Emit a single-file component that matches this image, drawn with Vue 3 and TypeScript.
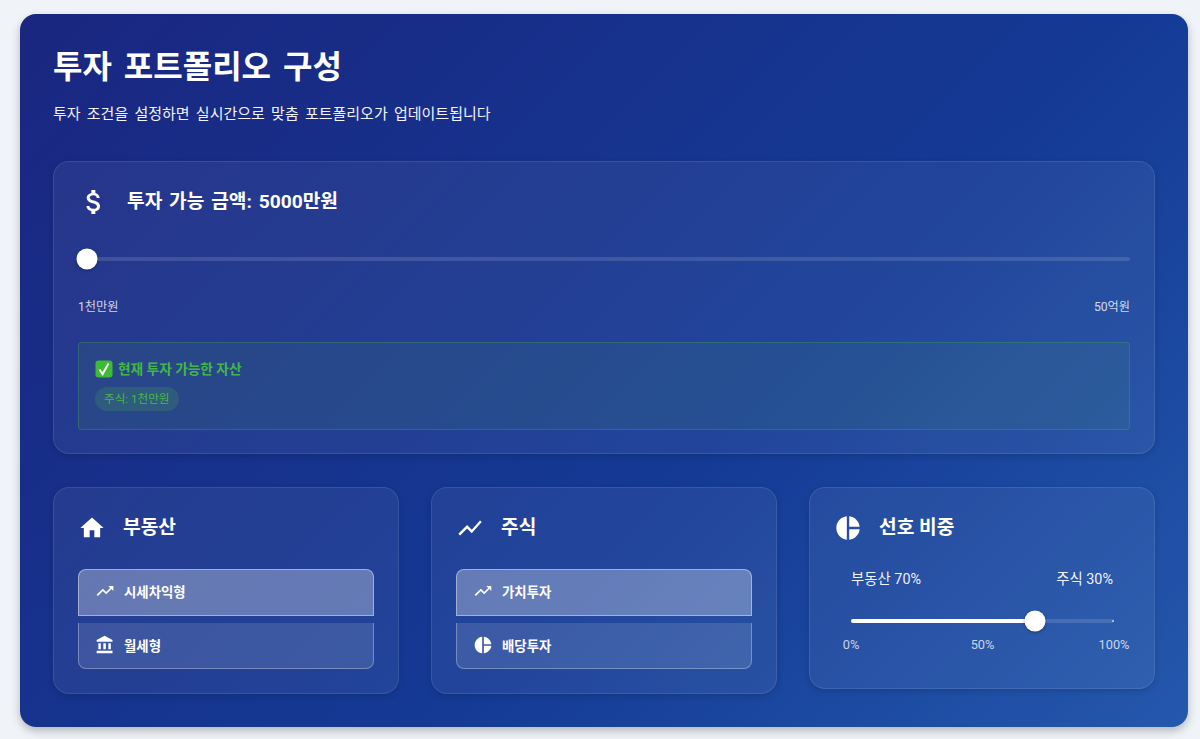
<script setup lang="ts">
const icons: Record<string, string> = {
  money: 'M11.8 10.9c-2.27-.59-3-1.2-3-2.15 0-1.09 1.01-1.85 2.7-1.85 1.78 0 2.44.85 2.5 2.1h2.21c-.07-1.72-1.12-3.3-3.21-3.81V3h-3v2.16c-1.94.42-3.5 1.68-3.5 3.61 0 2.31 1.91 3.46 4.7 4.13 2.5.6 3 1.48 3 2.41 0 .69-.49 1.79-2.7 1.79-2.06 0-2.87-.92-2.98-2.1h-2.2c.12 2.19 1.76 3.42 3.68 3.83V21h3v-2.15c1.95-.37 3.5-1.5 3.5-3.55 0-2.84-2.43-3.81-4.7-4.4z',
  home: 'M10 20v-6h4v6h5v-8h3L12 3 2 12h3v8z',
  chart: 'M3.5 18.49l6-6.01 4 4L22 6.92l-1.41-1.41-7.09 7.97-4-4L2 16.99z',
  trend: 'M16 6l2.29 2.29-4.88 4.88-4-4L2 16.59 3.41 18l6-6 4 4 6.3-6.29L22 12V6z',
  bank: 'M4 10v7h3v-7H4zm6 0v7h3v-7h-3zM2 22h19v-3H2v3zm14-12v7h3v-7h-3zm-4.5-9L2 6v2h19V6l-9.5-5z',
  pie: 'M11 2v20c-5.07-.5-9-4.79-9-10s3.93-9.5 9-10zm2.03 0v8.99H22c-.47-4.74-4.24-8.52-8.97-8.99zm0 11.01V22c4.74-.47 8.5-4.25 8.97-8.99h-8.97z',
}
const cards = [
  { title: '부동산', icon: 'home', options: [{ label: '시세차익형', icon: 'trend' }, { label: '월세형', icon: 'bank' }] },
  { title: '주식', icon: 'chart', options: [{ label: '가치투자', icon: 'trend' }, { label: '배당투자', icon: 'pie' }] },
]
const ratio = 70
</script>

<template>
  <main class="page">
    <section class="board">
      <h1 class="title">투자 포트폴리오 구성</h1>
      <p class="subtitle">투자 조건을 설정하면 실시간으로 맞춤 포트폴리오가 업데이트됩니다</p>

      <section class="glass amount">
        <header class="amount-head">
          <svg class="icon-lg" viewBox="0 0 24 24"><path :d="icons.money" /></svg>
          <h2 class="amount-title">투자 가능 금액: 5000만원</h2>
        </header>
        <div class="slider amount-slider">
          <span class="thumb thumb-start"></span>
        </div>
        <div class="range-labels">
          <span>1천만원</span>
          <span>50억원</span>
        </div>
        <div class="available">
          <div class="available-title">
            <svg class="check" viewBox="0 0 18 18">
              <rect x="0.5" y="0.5" width="17" height="17" rx="3" fill="#3dbb33" />
              <path d="M4.5 9.5 7.6 14 13.5 3.6" fill="none" stroke="#fff" stroke-width="2" />
            </svg>
            <span>현재 투자 가능한 자산</span>
          </div>
          <span class="chip">주식: 1천만원</span>
        </div>
      </section>

      <div class="grid">
        <section v-for="card in cards" :key="card.title" class="glass card">
          <header class="card-head">
            <svg class="icon-md" viewBox="0 0 24 24"><path :d="icons[card.icon]" /></svg>
            <h3 class="card-title">{{ card.title }}</h3>
          </header>
          <div class="options">
            <div
              v-for="(opt, i) in card.options"
              :key="opt.label"
              class="option"
              :class="i === 0 ? 'option-on' : 'option-off'"
            >
              <svg class="icon-sm" viewBox="0 0 24 24"><path :d="icons[opt.icon]" /></svg>
              <span>{{ opt.label }}</span>
            </div>
          </div>
        </section>

        <section class="glass card">
          <header class="card-head">
            <svg class="icon-md" viewBox="0 0 24 24"><path :d="icons.pie" /></svg>
            <h3 class="card-title">선호 비중</h3>
          </header>
          <div class="ratio">
            <div class="ratio-values">
              <span>부동산 {{ ratio }}%</span>
              <span>주식 {{ 100 - ratio }}%</span>
            </div>
            <div class="slider ratio-slider">
              <span class="fill" :style="{ width: ratio + '%' }"></span>
              <span class="thumb" :style="{ left: ratio + '%' }"></span>
            </div>
            <div class="ratio-scale">
              <span>0%</span>
              <span>50%</span>
              <span>100%</span>
            </div>
          </div>
        </section>
      </div>
    </section>
  </main>
</template>

<style>
html, body { margin: 0; background: #f0f4f8; }
</style>

<style scoped>
.page {
  box-sizing: border-box;
  height: 739px;
  padding: 14px 12px 12px 20px;
  background: #f0f4f8;
  font-family: Roboto, "Noto Sans CJK KR", "Noto Sans", sans-serif;
  color: #fff;
  overflow: hidden;
}
.board {
  box-sizing: border-box;
  height: 713px;
  padding: 32px 33px;
  border-radius: 16px;
  background: linear-gradient(135deg, #1a2680 0%, #143a95 60%, #2458ad 100%);
  box-shadow: 0 4px 8px rgba(0, 0, 0, 0.25);
}
.title {
  margin: 0;
  padding-top: 1px;
  font-size: 32px;
  line-height: 40px;
  font-weight: 700;
  word-spacing: 4px;
}
.subtitle {
  margin: 17px 0 0;
  font-size: 15px;
  line-height: 20px;
  word-spacing: 2.5px;
  opacity: 0.95;
}
.glass {
  box-sizing: border-box;
  border: 1px solid rgba(255, 255, 255, 0.1);
  border-radius: 16px;
  background: rgba(255, 255, 255, 0.06);
  box-shadow: 0 2px 6px rgba(0, 0, 0, 0.15);
}
.amount {
  height: 293px;
  margin-top: 37px;
  padding: 24px;
}
.amount-head {
  display: flex;
  align-items: center;
  gap: 17px;
  height: 32px;
}
.icon-lg { width: 32px; height: 32px; fill: #fff; flex: none; }
.icon-md { width: 28px; height: 28px; fill: #fff; flex: none; }
.icon-sm { width: 20px; height: 20px; fill: #fff; flex: none; }
.amount-title {
  margin: 0;
  font-size: 19.2px;
  font-weight: 700;
  line-height: 28px;
  word-spacing: 2px;
}
.slider {
  position: relative;
  height: 4px;
  border-radius: 2px;
  background: rgba(255, 255, 255, 0.13);
}
.amount-slider { margin-top: 39px; }
.thumb {
  position: absolute;
  top: 50%;
  width: 21px;
  height: 21px;
  border-radius: 50%;
  background: #fff;
  transform: translate(-50%, -50%);
  box-shadow: 0 1px 3px rgba(0, 0, 0, 0.35);
}
.thumb-start { left: 9px; }
.range-labels {
  display: flex;
  justify-content: space-between;
  margin-top: 38px;
  font-size: 12.2px;
  line-height: 16px;
  color: rgba(255, 255, 255, 0.8);
}
.available {
  box-sizing: border-box;
  height: 88px;
  margin-top: 27px;
  padding: 16px;
  border: 1px solid rgba(76, 175, 80, 0.3);
  border-radius: 4px;
  background: rgba(76, 175, 80, 0.1);
}
.available-title {
  display: flex;
  align-items: center;
  gap: 5px;
  font-size: 13.7px;
  line-height: 20px;
  font-weight: 700;
  color: #43b649;
}
.check { width: 18px; height: 18px; flex: none; }
.chip {
  display: inline-block;
  margin-top: 8px;
  padding: 0 9px;
  border-radius: 12px;
  background: rgba(76, 175, 80, 0.2);
  font-size: 11.6px;
  line-height: 24px;
  color: #4cb552;
}
.grid {
  display: grid;
  grid-template-columns: repeat(3, 1fr);
  gap: 32px;
  align-items: start;
  margin-top: 33px;
}
.card { padding: 24px; }
.card-head {
  display: flex;
  align-items: center;
  gap: 17px;
  height: 32px;
}
.card-title {
  margin: 0;
  font-size: 19.2px;
  line-height: 28px;
  font-weight: 700;
}
.options {
  display: flex;
  flex-direction: column;
  gap: 7px;
  margin-top: 25px;
}
.option {
  box-sizing: border-box;
  display: flex;
  align-items: center;
  gap: 9px;
  height: 46.5px;
  padding: 0 16px 1px;
  font-size: 13.4px;
  font-weight: 700;
  border: 1px solid rgba(255, 255, 255, 0.3);
}
.option-on {
  padding-bottom: 2px;
  background: rgba(255, 255, 255, 0.3);
  border-color: rgba(255, 255, 255, 0.4);
  border-radius: 8px 8px 0 0;
}
.option-off {
  background: rgba(255, 255, 255, 0.12);
  border-top: 0;
  border-radius: 0 0 8px 8px;
}
.ratio { padding: 0 16px 11px 17px; margin-top: 26px; }
.ratio-values {
  display: flex;
  justify-content: space-between;
  margin-right: 1px;
  font-size: 14.4px;
  line-height: 20px;
  color: rgba(255, 255, 255, 0.95);
}
.ratio-slider { margin-top: 29px; }
.ratio-slider::after {
  content: "";
  position: absolute;
  right: 0;
  top: 1px;
  width: 2px;
  height: 2px;
  border-radius: 50%;
  background: rgba(255, 255, 255, 0.7);
}
.fill {
  position: absolute;
  left: 0;
  top: 0;
  height: 100%;
  border-radius: 2px;
  background: #fff;
}
.ratio-scale {
  display: flex;
  justify-content: space-between;
  margin-top: 14px;
  font-size: 12.8px;
  line-height: 16px;
  color: rgba(255, 255, 255, 0.75);
}
.ratio-scale span {
  display: flex;
  justify-content: center;
  width: 0;
  white-space: nowrap;
}
</style>
